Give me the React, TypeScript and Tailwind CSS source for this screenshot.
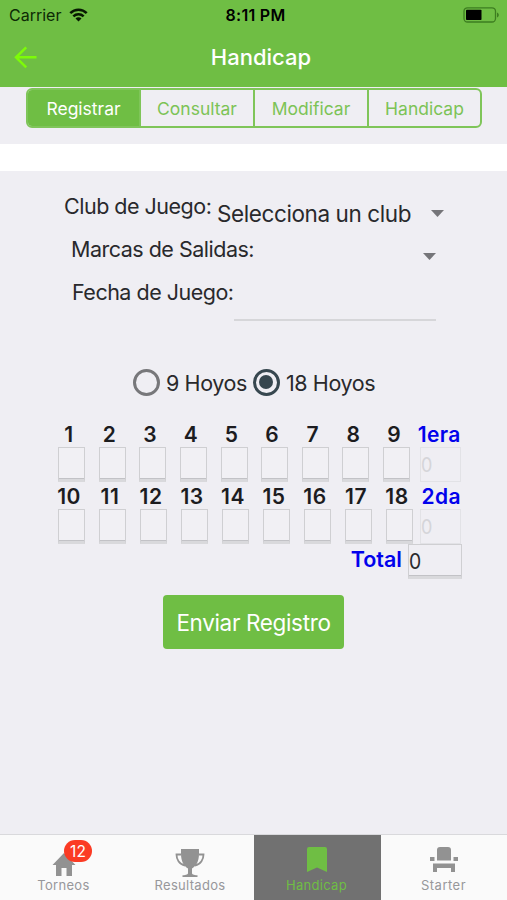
import { useState } from "react";
import clsx from "clsx";

const SEGMENTS = ["Registrar", "Consultar", "Modificar", "Handicap"];
const FRONT_NINE = [1, 2, 3, 4, 5, 6, 7, 8, 9];
const BACK_NINE = [10, 11, 12, 13, 14, 15, 16, 17, 18];

function StatusBar() {
  return (
    <div className="flex h-[30px] items-center justify-between pl-[9px] pr-[7px] text-black">
      <div className="flex w-[151px] items-center gap-2">
        <span className="text-[16px] text-[#0d2a05]">Carrier</span>
        <svg width="19" height="14" viewBox="0 0 20 15" fill="none" stroke="#071802" strokeWidth="2.7">
          <path d="M1.2 5.6a12.4 12.4 0 0 1 17.6 0" />
          <path d="M4.5 8.9a7.8 7.8 0 0 1 11 0" />
          <path d="M10 14.4 6.8 11.2a4.5 4.5 0 0 1 6.4 0Z" fill="#071802" stroke="none" />
        </svg>
      </div>
      <span className="text-[16px] font-semibold tracking-[0.3px]">8:11 PM</span>
      <div className="flex w-[149px] justify-end">
        <svg width="37" height="16" viewBox="0 0 37 16">
          <rect x="1" y="0.8" width="31.5" height="14.2" rx="3.5" fill="none" stroke="#3d7d20" strokeWidth="1.3" />
          <rect x="3" y="2.8" width="15.5" height="10.2" rx="0.8" fill="#000" />
          <path d="M34 5.4c2.4 1 2.4 4 0 5Z" fill="#3d7d20" />
        </svg>
      </div>
    </div>
  );
}

function Header() {
  return (
    <header className="h-[87px] bg-[#6fbe44]">
      <StatusBar />
      <div className="grid h-[55px] grid-cols-[60px_1fr_45px] items-center">
        <button type="button" aria-label="Regresar" className="pl-[14px]">
          <svg width="24" height="24" viewBox="0 0 24 24" fill="none" stroke="#7dfb08" strokeWidth="2.5">
            <path d="M22.5 11.3H2.5M12.2 1.3 2 11.3l10.2 10" />
          </svg>
        </button>
        <h1 className="text-center text-[22px] font-medium text-white">Handicap</h1>
      </div>
    </header>
  );
}

function Caret() {
  return (
    <svg width="13" height="7" viewBox="0 0 13 7">
      <path d="M0 0h13L6.5 7Z" fill="#757579" />
    </svg>
  );
}

function ScoreBox({ hole, wide }: { hole: number; wide: boolean }) {
  return (
    <div className={clsx("shrink-0", wide ? "w-[41px]" : "w-[40.65px]")}>
      <div className="flex h-[26px] w-[22px] items-center justify-center pt-px text-[21px] font-semibold tracking-[0.5px] text-[#1c1c1f]">
        {hole}
      </div>
      <input
        aria-label={`Hoyo ${hole}`}
        className="block h-[35px] w-[27px] border border-b-3 border-[#cfcfd2] border-b-[#d9d9dc] bg-[#f1f0f4] shadow-[inset_0_-1px_0_#c2c2c6] outline-none"
      />
    </div>
  );
}

function Subtotal({ label, className }: { label: string; className: string }) {
  return (
    <div className={className}>
      <div className="flex h-[26px] items-center justify-end pt-px text-[21px] font-semibold tracking-[0.4px] text-[#0202ec]">
        {label}
      </div>
      <div className="ml-auto flex h-[35px] w-[41px] items-center border border-[#e2e2e6] text-[20px] text-[#d5d5d9]">
        <span className="origin-left scale-x-90">0</span>
      </div>
    </div>
  );
}

function Radio({ label, checked, onSelect }: { label: string; checked: boolean; onSelect: () => void }) {
  return (
    <button type="button" role="radio" aria-checked={checked} onClick={onSelect} className="flex items-center gap-[6px]">
      <span
        className={clsx(
          "flex size-[27px] items-center justify-center rounded-full border-[3px]",
          checked ? "border-[#37474f]" : "border-[#77777a]"
        )}
      >
        {checked && <span className="size-[14px] rounded-full bg-[#37474f]" />}
      </span>
      <span className="pt-px text-[21.5px] tracking-[-0.4px]">{label}</span>
    </button>
  );
}

function TabBar() {
  return (
    <nav className="grid h-[66px] grid-cols-[127px_127px_127px_1fr] border-t border-[#d9d9dc] bg-[#fafafa] text-[13px] leading-[19px] tracking-[0.3px] text-[#97979a]">
      <div className="relative flex flex-col items-center pt-[17px]">
        <svg width="24" height="24" viewBox="0 0 24 24" fill="#929292">
          <path d="M12 1 0.5 13H4v11h5.5v-8h5v8H20V13h3.5Z" />
        </svg>
        <span className="absolute left-[64px] top-[5px] flex h-[22px] w-[28px] items-center justify-center rounded-full bg-[#fb3b24] text-[15.5px] tracking-normal text-white">
          12
        </span>
        <span>Torneos</span>
      </div>
      <div className="flex flex-col items-center pr-px pt-[14px]">
        <svg width="30" height="29" viewBox="0 0 30 29" fill="#929292">
          <path d="M6 0h18v4.5C24 13 21 17 17 19.4V24c0 1.4 1.4 2 5.5 2.3V28h-15v-1.7C11.6 26 13 25.4 13 24v-4.6C9 17 6 13 6 4.5Z" />
          <path d="M6 5.5H1.5C1.5 10 4 15.500 10 16.500M24 5.500h4.500C28.500 10 26 15.500 20 16.500" fill="none" stroke="#929292" strokeWidth="1.8" />
        </svg>
        <span className="-mt-[2px]">Resultados</span>
      </div>
      <div className="flex flex-col items-center bg-[#717171] pr-[2px] pt-[12px] text-[#6fbe44]">
        <svg width="20" height="25" viewBox="0 0 20 25" fill="#6fbe44">
          <path d="M2 0h16a2 2 0 0 1 2 2v23l-10-4.5L0 25V2a2 2 0 0 1 2-2Z" />
        </svg>
        <span className="mt-[4px]">Handicap</span>
      </div>
      <div className="flex flex-col items-center pr-px pt-[12px]">
        <svg width="28" height="25" viewBox="0 0 28 25" fill="#929292">
          <path d="M7 13.5V3q0-3 3-3h8q3 0 3 3v10.5ZM0 10h4.5v4H0ZM23.5 10H28v4h-4.5ZM3 16.5h22V25h-4v-4H7v4H3Z" />
        </svg>
        <span className="mt-[4px] tracking-[0.5px]">Starter</span>
      </div>
    </nav>
  );
}

export default function App() {
  const [segment, setSegment] = useState("Registrar");
  const [holes, setHoles] = useState(18);

  return (
    <div className="flex h-[900px] w-[507px] flex-col overflow-hidden bg-[#efeef3] font-['Inter','Liberation_Sans',sans-serif] text-[#29292c]">
      <Header />

      <div className="h-[57px] pl-[26px] pr-[25px] pt-px">
        <div className="grid h-[40px] grid-cols-[111px_114px_114px_1fr] overflow-hidden rounded-[6px] border-2 border-[#7fc559]">
          {SEGMENTS.map((name, i) => (
            <button
              key={name}
              type="button"
              onClick={() => setSegment(name)}
              className={clsx(
                "pt-[2px] text-[17.5px]",
                i > 0 && "border-l-2 border-[#7fc559]",
                segment === name ? "bg-[#6fbe44] text-white" : "text-[#7cc356]"
              )}
            >
              {name}
            </button>
          ))}
        </div>
      </div>
      <div className="h-[27px] bg-white" />

      <main className="flex-1 text-[21.5px] leading-[26px] tracking-[-0.5px]">
        <div className="flex h-[66px] items-start pl-[64px] pt-[22px]">
          <span className="w-[153px] whitespace-nowrap">Club de Juego:</span>
          <span className="mt-[8px] w-[214px] whitespace-nowrap text-[22.5px] tracking-[-0.4px]">Selecciona un club</span>
          <span className="mt-[17px]"><Caret /></span>
        </div>
        <div className="flex h-[43px] items-start pl-[71px]">
          <span className="-mt-px w-[352px] whitespace-nowrap">Marcas de Salidas:</span>
          <span className="mt-[16px]"><Caret /></span>
        </div>
        <div className="flex h-[43px] items-start pl-[72px]">
          <span className="-mt-px w-[162px] whitespace-nowrap">Fecha de Juego:</span>
          <input aria-label="Fecha de Juego" className="h-[41px] w-[202px] border-b-2 border-[#d6d6d9] outline-none" />
        </div>

        <div role="radiogroup" className="mt-[45px] flex h-[28px] items-center gap-[6px] pl-[133px]">
          <Radio label="9 Hoyos" checked={holes === 9} onSelect={() => setHoles(9)} />
          <Radio label="18 Hoyos" checked={holes === 18} onSelect={() => setHoles(18)} />
        </div>

        <div className="mt-[25px] flex h-[62px] pl-[58px]">
          {FRONT_NINE.map((n) => <ScoreBox key={n} hole={n} wide={false} />)}
          <Subtotal label="1era" className="-ml-[9px] w-[46px]" />
        </div>
        <div className="flex h-[62px] pl-[58px]">
          {BACK_NINE.map((n) => <ScoreBox key={n} hole={n} wide />)}
          <Subtotal label="2da" className="-ml-[12px] w-[46px]" />
        </div>
        <div className="flex h-[35px] justify-end gap-[6px] pr-[45px]">
          <span className="mt-px text-[21.5px] font-semibold tracking-normal text-[#0202ec]">Total</span>
          <div className="-mt-px flex h-[35px] w-[54px] items-center border border-b-3 border-[#cfcfd2] border-b-[#d9d9dc] shadow-[inset_0_-1px_0_#c2c2c6]">
            <span className="origin-left scale-x-90">0</span>
          </div>
        </div>

        <button
          type="button"
          className="ml-[163px] mt-[15px] flex h-[54px] w-[181px] items-center justify-center rounded-[4px] bg-[#6fbe44] pt-px text-[22.5px] tracking-[-0.35px] text-white"
        >
          Enviar Registro
        </button>
      </main>

      <TabBar />
    </div>
  );
}
